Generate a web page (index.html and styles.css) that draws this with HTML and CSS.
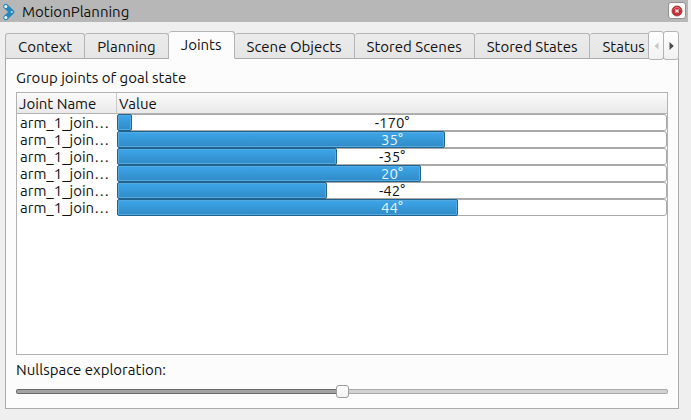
FILE: index.html
```html
<!DOCTYPE html>
<html lang="en">
<head>
<meta charset="utf-8">
<title>MotionPlanning</title>
<link rel="stylesheet" href="styles.css">
</head>
<body>
<header class="titlebar">
  <svg class="logo" width="12" height="18" viewBox="0 0 12 18" aria-hidden="true">
    <path d="M2.8 3.4 8.8 9 2.8 14.6" fill="none" stroke="#2787bd" stroke-width="5" stroke-linecap="round" stroke-linejoin="round"/>
    <circle cx="2.8" cy="3.4" r="1.5" fill="#eefaff"/>
    <circle cx="8.8" cy="9" r="1.1" fill="#b5dcef"/>
    <circle cx="2.8" cy="14.6" r="1.5" fill="#eefaff"/>
  </svg>
  <h1 class="title">MotionPlanning</h1>
  <button class="close" type="button" aria-label="Close">
    <svg width="12" height="12" viewBox="0 0 12 12" aria-hidden="true">
      <circle cx="6" cy="6" r="5" fill="#c22f36" stroke="#a3343a" stroke-width=".8"/>
      <path d="M2.5 4.5a4 4 0 0 1 7 0" fill="none" stroke="#dc7479"/>
      <path d="M4.4 4.4 7.6 7.6M7.6 4.4 4.4 7.6" stroke="#f6dfe0" stroke-width="1.4"/>
    </svg>
  </button>
</header>
<main class="dock">
  <div class="tabbar">
    <div class="tabs" role="tablist">
      <button class="tab" type="button" role="tab">Context</button>
      <button class="tab" type="button" role="tab">Planning</button>
      <button class="tab active" type="button" role="tab" aria-selected="true">Joints</button>
      <button class="tab" type="button" role="tab">Scene Objects</button>
      <button class="tab" type="button" role="tab">Stored Scenes</button>
      <button class="tab" type="button" role="tab">Stored States</button>
      <button class="tab" type="button" role="tab">Status</button>
    </div>
    <div class="scrollers">
      <button class="scroller" type="button" aria-label="Scroll tabs left" disabled>
        <svg width="5" height="8" viewBox="0 0 5 8" aria-hidden="true"><path d="M4.5 0.5v7L0.5 4z" fill="#c6c6c6"/></svg>
      </button>
      <button class="scroller" type="button" aria-label="Scroll tabs right">
        <svg width="5" height="8" viewBox="0 0 5 8" aria-hidden="true"><path d="M0.5 0v8L4.8 4z" fill="#4b4b4b"/></svg>
      </button>
    </div>
  </div>
  <section class="panel" role="tabpanel">
    <h2 class="label">Group joints of goal state</h2>
    <div class="view">
      <table class="joints">
        <thead><tr><th class="name">Joint Name</th><th>Value</th></tr></thead>
        <tbody>
          <tr><td class="name">arm_1_join…</td><td><div class="bar"><div class="fill" style="width:2.8%"></div><span class="value">-170°</span></div></td></tr>
          <tr><td class="name">arm_1_join…</td><td><div class="bar"><div class="fill" style="width:59.8%"></div><span class="value over">35°</span></div></td></tr>
          <tr><td class="name">arm_1_join…</td><td><div class="bar"><div class="fill" style="width:40.2%"></div><span class="value">-35°</span></div></td></tr>
          <tr><td class="name">arm_1_join…</td><td><div class="bar"><div class="fill" style="width:55.4%"></div><span class="value over">20°</span></div></td></tr>
          <tr><td class="name">arm_1_join…</td><td><div class="bar"><div class="fill" style="width:38.3%"></div><span class="value">-42°</span></div></td></tr>
          <tr><td class="name">arm_1_join…</td><td><div class="bar"><div class="fill" style="width:62.2%"></div><span class="value over">44°</span></div></td></tr>
        </tbody>
      </table>
    </div>
    <label class="label slider-label" for="nullspace">Nullspace exploration:</label>
    <input class="slider" id="nullspace" type="range" min="-100" max="100" value="0">
  </section>
</main>
</body>
</html>
```
FILE: styles.css
```css
* { box-sizing: border-box; }

body {
  margin: 0;
  height: 100vh;
  display: flex;
  flex-direction: column;
  background: #efefef;
  color: #111;
  font: 15px/18px Ubuntu, "Noto Sans", sans-serif;
}

button {
  margin: 0;
  padding: 0;
  font: inherit;
  color: inherit;
}

.titlebar {
  display: flex;
  align-items: flex-end;
  height: 22px;
  margin-right: 3px;
  padding: 2px;
  padding-bottom: 1px;
  background: #b7b7b7;
}

.logo { margin: 0 7px 0 1px; }

.title {
  flex: 1;
  margin: 0;
  font-size: 15px;
  font-weight: 400;
}

.close {
  display: flex;
  align-items: center;
  justify-content: center;
  align-self: flex-start;
  width: 18px;
  height: 17px;
  border: 1px solid #929292;
  border-radius: 3px;
  background: #fafafa;
}

.close svg { flex: none; }

.dock {
  flex: 1;
  display: flex;
  flex-direction: column;
  min-height: 0;
  padding: 9px 12px 11px 5px;
}

.tabbar {
  position: relative;
  z-index: 1;
  display: flex;
  height: 29px;
  margin-bottom: -2px;
}

.tabs {
  flex: 1;
  display: flex;
  align-items: flex-end;
  min-width: 0;
  height: 28px;
  overflow: hidden;
}

.tab {
  flex: none;
  height: 26px;
  padding: 1px 12px 0;
  border: 1px solid #b4b4b4;
  border-left-width: 0;
  border-bottom-color: #ababab;
  border-radius: 3px 3px 0 0;
  background: linear-gradient(#ebebeb, #e5e5e5);
}

.tab:first-child { border-left-width: 1px; }

.tab.active {
  height: 28px;
  padding-bottom: 2px;
  border-bottom-color: #fcfcfc;
  background: #fcfcfc;
}

.scrollers { display: flex; }

.scroller {
  display: flex;
  align-items: center;
  justify-content: center;
  width: 16px;
  border: 1px solid #b4b4b4;
  border-radius: 3px;
  background: linear-gradient(#fff, #f1f1f1);
}

.scroller + .scroller { margin-left: -1px; }

.panel {
  flex: 1;
  display: flex;
  flex-direction: column;
  min-height: 0;
  padding: 10px 10px 9px;
  border: 1px solid #ababab;
  background: #fcfcfc;
}

.label {
  margin: 0 0 5px;
  font-size: 15px;
  font-weight: 400;
}

.view {
  flex: 1;
  min-height: 0;
  overflow: hidden;
  border: 1px solid #b2b2b2;
  background: #fff;
}

.joints {
  width: 100%;
  table-layout: fixed;
  border-collapse: separate;
  border-spacing: 0;
}

.joints th {
  height: 21px;
  padding: 1px 2px 0;
  border-bottom: 1px solid #b2b2b2;
  background: linear-gradient(#fbfbfb, #e9e9e9);
  font-weight: 400;
  text-align: left;
}

.joints th.name { border-right: 1px solid #c8c8c8; }

.joints .name { width: 100px; }

.joints td {
  height: 17px;
  padding: 0;
  line-height: 17px;
}

.joints td.name {
  padding-left: 3px;
  white-space: nowrap;
}

.bar {
  position: relative;
  height: 17px;
  border: 1px solid #a9a9a9;
  border-radius: 3px;
  background: #fff;
}

.fill {
  height: 17px;
  margin: -1px;
  border: 1px solid #20638f;
  border-radius: 2px;
  background: linear-gradient(#3da6ea, #308bc6);
  box-shadow: inset 0 0 0 1px #55abe0;
}

.value {
  position: absolute;
  inset: -1px 0;
  text-align: center;
}

.value.over { color: #e4f4ff; }

.slider-label { margin-top: 6px; }

.slider {
  appearance: none;
  width: 100%;
  height: 15px;
  margin: 0;
  background: none;
}

.slider::-webkit-slider-runnable-track {
  height: 5px;
  border: 1px solid transparent;
  border-radius: 2px;
  background:
    linear-gradient(90deg, #a3a3a3 50%, #d2d2d2 50%) padding-box,
    linear-gradient(90deg, #6b6b6b 50%, #a9a9a9 50%) border-box;
}

.slider::-webkit-slider-thumb {
  appearance: none;
  width: 13px;
  height: 13px;
  margin-top: -5px;
  border: 1px solid #9c9c9c;
  border-radius: 3px;
  background: linear-gradient(#fff, #f2f2f2);
}
```
